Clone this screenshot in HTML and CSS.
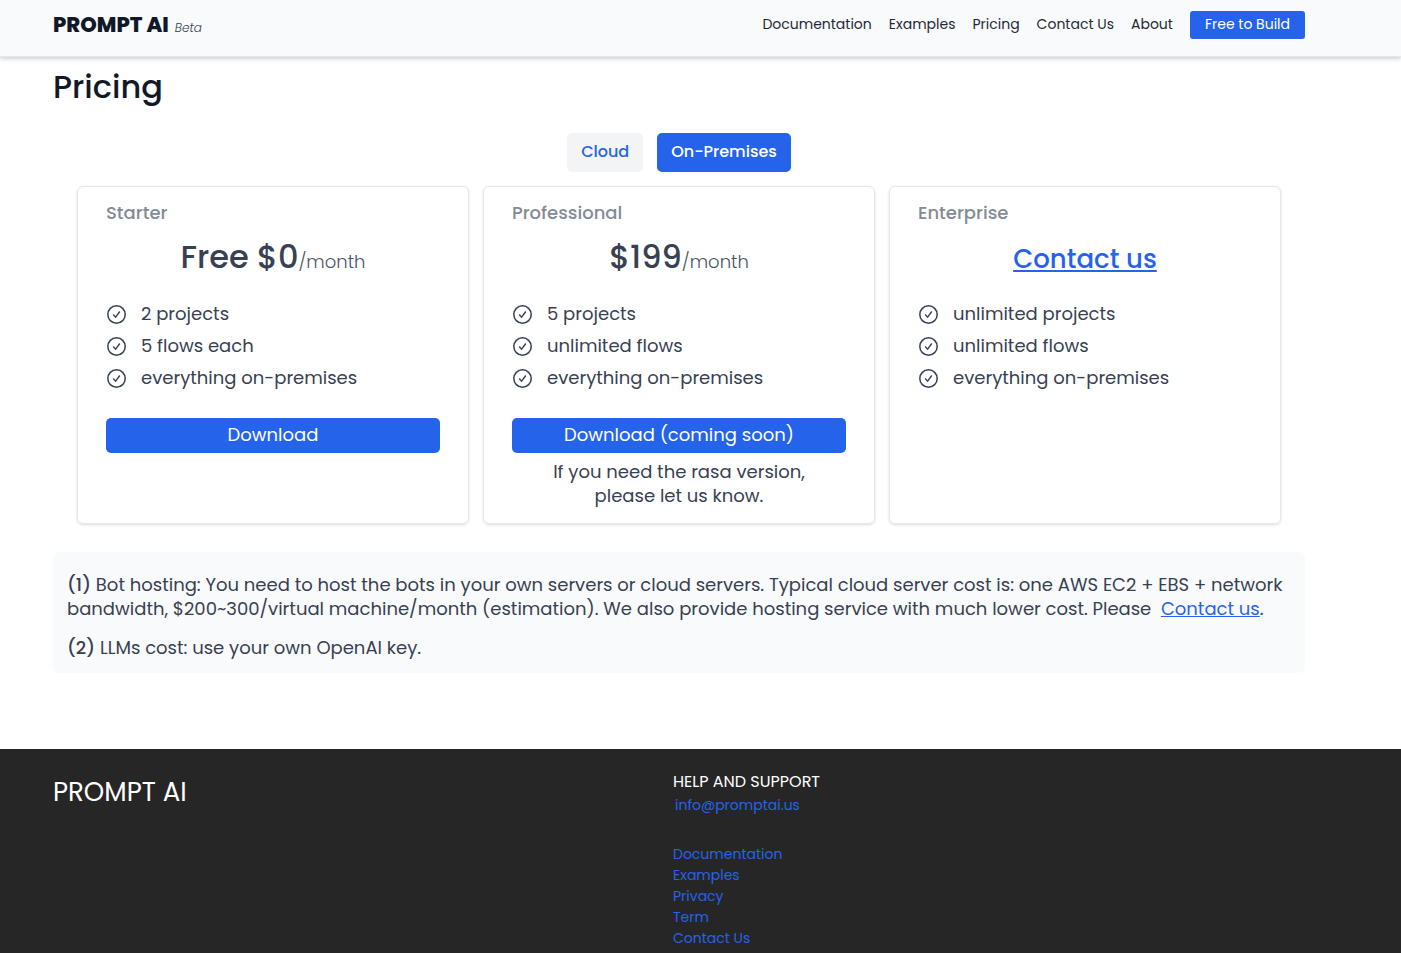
FILE: index.html
```html
<!DOCTYPE html>
<html lang="en">
<head>
<meta charset="utf-8">
<meta name="viewport" content="width=device-width, initial-scale=1">
<title>Pricing - Prompt AI</title>
<link rel="stylesheet" href="styles.css">
</head>
<body>
<svg class="sprite" aria-hidden="true">
  <symbol id="check" viewBox="0 0 21 21">
    <circle cx="10.5" cy="10.5" r="8.7" fill="none" stroke="currentColor" stroke-width="1.5"/>
    <path d="M7.2 10.5l2.4 2.6 4.2-5.6" fill="none" stroke="currentColor" stroke-width="1.4"/>
  </symbol>
</svg>
<header class="header">
  <a class="brand" href="#"><span class="brand-name">PROMPT AI</span><em class="brand-tag">Beta</em></a>
  <nav class="nav">
    <a href="#">Documentation</a>
    <a href="#">Examples</a>
    <a href="#">Pricing</a>
    <a href="#">Contact Us</a>
    <a href="#">About</a>
    <a class="nav-cta" href="#">Free to Build</a>
  </nav>
</header>
<main class="main">
  <h1 class="title">Pricing</h1>
  <div class="tabs">
    <button class="tab" type="button">Cloud</button>
    <button class="tab tab-active" type="button">On-Premises</button>
  </div>
  <section class="plans">
    <article class="plan">
      <h2 class="plan-name">Starter</h2>
      <p class="price"><span class="amount">Free $0</span><span class="period">/month</span></p>
      <ul class="features">
        <li><svg class="icon"><use href="#check"/></svg>2 projects</li>
        <li><svg class="icon"><use href="#check"/></svg>5 flows each</li>
        <li><svg class="icon"><use href="#check"/></svg>everything on-premises</li>
      </ul>
      <button class="download" type="button">Download</button>
    </article>
    <article class="plan">
      <h2 class="plan-name">Professional</h2>
      <p class="price"><span class="amount">$199</span><span class="period">/month</span></p>
      <ul class="features">
        <li><svg class="icon"><use href="#check"/></svg>5 projects</li>
        <li><svg class="icon"><use href="#check"/></svg>unlimited flows</li>
        <li><svg class="icon"><use href="#check"/></svg>everything on-premises</li>
      </ul>
      <button class="download" type="button">Download (coming soon)</button>
      <p class="plan-note">If you need the rasa version,<br>please let us know.</p>
    </article>
    <article class="plan">
      <h2 class="plan-name">Enterprise</h2>
      <p class="price"><a class="price-link" href="#">Contact us</a></p>
      <ul class="features">
        <li><svg class="icon"><use href="#check"/></svg>unlimited projects</li>
        <li><svg class="icon"><use href="#check"/></svg>unlimited flows</li>
        <li><svg class="icon"><use href="#check"/></svg>everything on-premises</li>
      </ul>
    </article>
  </section>
  <section class="notes">
    <p><b>(1)</b> Bot hosting: You need to host the bots in your own servers or cloud servers. Typical cloud server cost is: one AWS EC2 + EBS + network bandwidth, $200~300/virtual machine/month (estimation). We also provide hosting service with much lower cost. Please &nbsp;<a href="#">Contact us</a>.</p>
    <p><b>(2)</b> LLMs cost: use your own OpenAI key.</p>
  </section>
</main>
<footer class="footer">
  <div class="footer-brand">PROMPT AI</div>
  <div class="support">
    <h2 class="support-title">HELP AND SUPPORT</h2>
    <a class="mail" href="mailto:info@promptai.us">info@promptai.us</a>
    <nav class="footer-links">
      <a href="#">Documentation</a>
      <a href="#">Examples</a>
      <a href="#">Privacy</a>
      <a href="#">Term</a>
      <a href="#">Contact Us</a>
    </nav>
  </div>
</footer>
</body>
</html>
```
FILE: styles.css
```css
* { box-sizing: border-box; }
body, h1, h2, p, ul { margin: 0; padding: 0; }
body {
  display: flex;
  flex-direction: column;
  min-height: 100vh;
  font-family: Poppins, Inter, sans-serif;
  font-size: 18px;
  line-height: 24px;
  color: #374151;
  background: #fff;
}
a { color: #2563eb; }
button { border: 0; font-family: inherit; cursor: pointer; }
.sprite { display: none; }

.header {
  display: flex;
  align-items: flex-start;
  justify-content: space-between;
  height: 57px;
  padding: 11px 96px 0 53px;
  background: #f9fafb;
  border-bottom: 1px solid #e5e7eb;
  box-shadow: 0 1px 5px rgba(0, 0, 0, 0.25);
}
.brand {
  display: flex;
  align-items: baseline;
  gap: 6px;
  line-height: 28px;
  color: #111827;
  text-decoration: none;
}
.brand-name { font-size: 21px; font-weight: 800; }
.brand-tag { font-size: 12px; font-weight: 300; color: #374151; }
.nav {
  display: flex;
  gap: 17px;
  font-size: 14px;
  line-height: 26px;
}
.nav a { color: #1f2937; text-decoration: none; }
.nav .nav-cta {
  height: 28px;
  padding: 0 15px;
  border-radius: 3px;
  background: #2563eb;
  color: #fff;
}

.main { padding: 0 96px 76px 53px; }
.title {
  padding-top: 9px;
  font-size: 32px;
  line-height: 42px;
  font-weight: 500;
  color: #111827;
}
.tabs {
  display: flex;
  justify-content: center;
  gap: 14px;
  margin: 25px 0 14px;
}
.tab {
  height: 39px;
  padding: 0 14px 2px;
  border-radius: 5px;
  background: #f3f4f6;
  color: #2563eb;
  font-size: 16px;
  font-weight: 500;
}
.tab-active { background: #2563eb; color: #fff; }

.plans {
  display: grid;
  grid-template-columns: repeat(3, 1fr);
  gap: 14px;
  padding: 0 24px;
}
.plan {
  padding: 14px 28px 15px;
  border: 1px solid #e5e7eb;
  border-radius: 6px;
  box-shadow: 0 1px 3px rgba(0, 0, 0, 0.14);
}
.plan-name {
  font-size: 18px;
  line-height: 24px;
  font-weight: 500;
  color: #858b96;
}
.price {
  height: 40px;
  margin: 12px 0 25px;
  text-align: center;
  line-height: 40px;
}
.amount { font-size: 32px; font-weight: 500; }
.period { font-size: 18px; font-weight: 300; color: #4b5563; }
.price-link { font-size: 26px; line-height: 44px; font-weight: 500; }
.features {
  display: grid;
  gap: 8px;
  list-style: none;
}
.features li { display: flex; align-items: center; gap: 14px; }
.icon { width: 21px; height: 21px; }
.download {
  width: 100%;
  height: 35px;
  margin-top: 28px;
  padding: 0 0 2px;
  border-radius: 5px;
  background: #2563eb;
  color: #fff;
  font-size: 18px;
}
.plan-note { margin-top: 7px; text-align: center; }

.notes {
  display: grid;
  gap: 15px;
  margin-top: 28px;
  padding: 21px 14px 13px;
  border-radius: 6px;
  background: #f9fafb;
}
.notes b { font-weight: 500; }

.footer {
  display: grid;
  grid-template-columns: 1fr 1fr;
  flex: 1;
  padding: 22px 108px 4px 53px;
  background: #262626;
  color: #fff;
}
.footer-brand { font-size: 26px; line-height: 42px; }
.support { display: flex; flex-direction: column; font-size: 14px; line-height: 21px; }
.support a { text-decoration: none; }
.support-title { font-size: 16px; line-height: 22px; font-weight: 400; }
.mail { padding-left: 2px; margin: 2px 0 28px; }
.footer-links { display: flex; flex-direction: column; align-items: flex-start; }
```
